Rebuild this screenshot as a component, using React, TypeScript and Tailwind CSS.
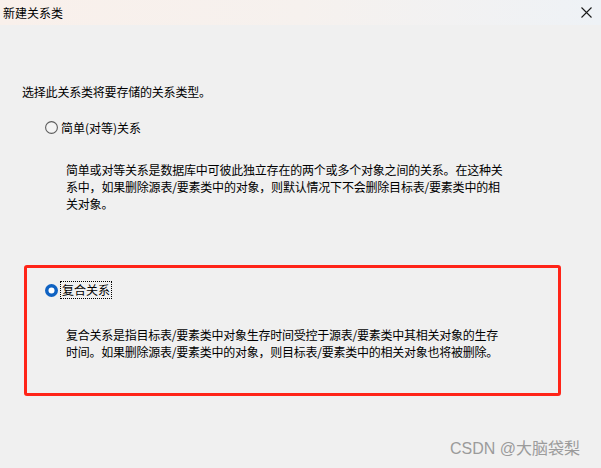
import React from "react"

const font = { fontFamily: '"Noto Sans CJK SC", "Noto Sans", sans-serif' }

function Radio({ checked }: { checked?: boolean }) {
  if (checked) {
    return (
      <svg width="13" height="13" viewBox="0 0 13 13" className="shrink-0">
        <circle cx="6.5" cy="6.5" r="6.5" fill="#0f62c2" />
        <circle cx="6.5" cy="6.5" r="3" fill="#ffffff" />
      </svg>
    )
  }
  return (
    <svg width="13" height="13" viewBox="0 0 13 13" className="shrink-0">
      <circle cx="6.5" cy="6.5" r="5.9" fill="#f4f4f4" stroke="#5c5c5c" strokeWidth="1.1" />
    </svg>
  )
}

export default function App() {
  return (
    <div
      className="relative flex h-[468px] w-[601px] flex-col overflow-hidden bg-[#f0f0f0] text-[12px] leading-[17px] text-black"
      style={font}
    >
      <div className="flex h-[25px] shrink-0 items-center justify-between bg-gradient-to-r from-[#f9f0eb] via-[#f6f1ee] to-[#eef2f6] pl-[3px] pr-[9px]">
        <span>新建关系类</span>
        <svg width="11" height="11" viewBox="0 0 11 11">
          <path d="M0.5 0.5 L10.5 10.5 M10.5 0.5 L0.5 10.5" stroke="#1a1a1a" strokeWidth="1.1" />
        </svg>
      </div>

      <div className="flex flex-col px-[22px] pt-[58px]">
        <p className="tracking-[-0.2px]">选择此关系类将要存储的关系类型。</p>

        <div className="ml-[23px] mt-[19px] flex items-center gap-[3px]">
          <Radio />
          <span>简单(对等)关系</span>
        </div>

        <p className="ml-[44px] mt-[25px] tracking-[-0.2px]">
          简单或对等关系是数据库中可彼此独立存在的两个或多个对象之间的关系。在这种关
          <br />
          系中，如果删除源表/要素类中的对象，则默认情况下不会删除目标表/要素类中的相
          <br />
          关对象。
        </p>

        <div className="ml-[2px] mt-[53px] flex h-[131px] w-[537px] flex-col rounded-[3px] border-[3px] border-[#ff2418] pl-[18px] pt-[13px]">
          <div className="flex items-center gap-[2px]">
            <Radio checked />
            <span className="border border-dotted border-black px-px leading-[16px]">复合关系</span>
          </div>
          <p className="ml-[21px] mt-[27px] tracking-[-0.25px]">
            复合关系是指目标表/要素类中对象生存时间受控于源表/要素类中其相关对象的生存
            <br />
            时间。如果删除源表/要素类中的对象，则目标表/要素类中的相关对象也将被删除。
          </p>
        </div>
      </div>

      <div
        className="absolute left-[450px] top-[439px] text-[16px] leading-[20px] text-[#9b9b9b]"
        style={{ fontFamily: '"Liberation Sans", "Noto Sans CJK SC", sans-serif' }}
      >
        CSDN @大脑袋梨
      </div>
    </div>
  )
}
